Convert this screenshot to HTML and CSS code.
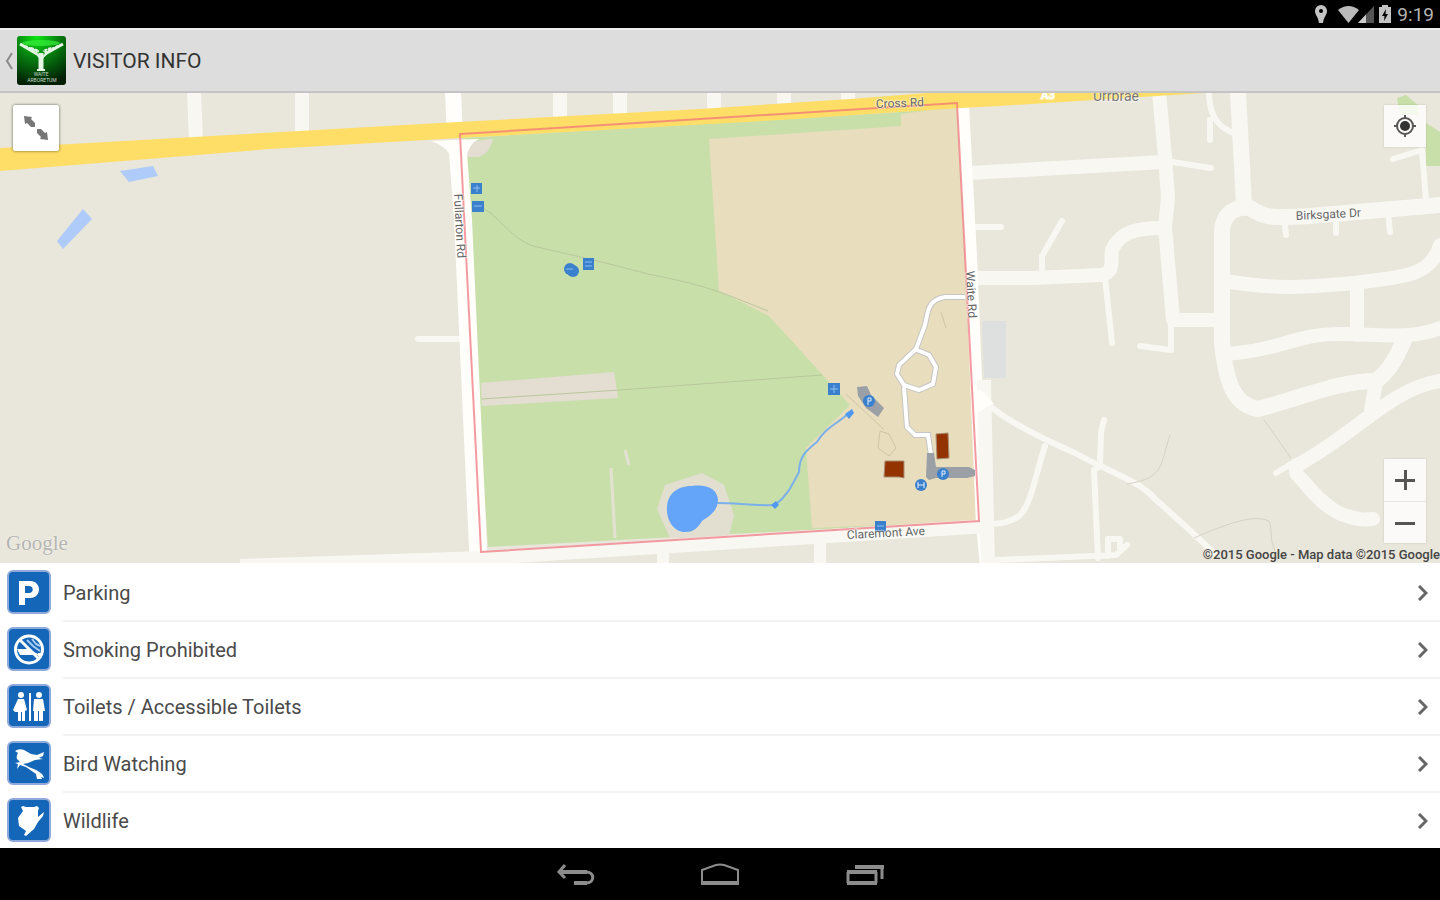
FILE: index.html
```html
<!DOCTYPE html>
<html lang="en">
<head>
  <meta charset="utf-8">
  <meta content="width=device-width, initial-scale=1.0" name="viewport">
  <title>Visitor Info</title>
  <link rel="stylesheet" href="styles.css">
</head>
<body>
  <div class="status-bar">
    <svg class="status-pin" viewBox="0 0 12 18" aria-hidden="true"><path fill-rule="evenodd" d="M6 0a6 6 0 0 1 6 6c0 4-3 5-4 12H4C3 11 0 10 0 6a6 6 0 0 1 6-6zM6 4a2 2 0 1 0 0 4 2 2 0 0 0 0-4z"/></svg>
    <svg class="status-signal" viewBox="0 0 36 17" aria-hidden="true">
      <path fill="#bbb" d="M0 4Q10.500-4 21 4L10.500 17z"/>
      <path fill="#555" d="M36 0v17H20z"/>
      <path fill="#ccc" d="M28 8.500V17h-8z"/>
    </svg>
    <svg class="status-battery" viewBox="0 0 12 18" aria-hidden="true"><path fill-rule="evenodd" d="M3 0h6v2h3v16H0V2h3zM7 4L3 11h2.500L5 16l4-7H6.500z"/></svg>
    <span class="clock">9:19</span>
  </div>

  <header class="action-bar">
    <a class="up" href="#" aria-label="Navigate up">
      <svg class="up-arrow" viewBox="0 0 8 18" aria-hidden="true"><path d="M7 1L2 9l5 8"/></svg>
      <svg class="logo" viewBox="0 0 49 49" aria-hidden="true">
        <defs>
          <radialGradient id="leaf" cx=".4" cy="0" r="1">
            <stop offset="0" stop-color="#0be812"/>
            <stop offset=".45" stop-color="#078010"/>
            <stop offset="1" stop-color="#001f04"/>
          </radialGradient>
        </defs>
        <rect width="49" height="49" rx="3" fill="url(#leaf)"/>
        <ellipse cx="24" cy="7" rx="19" ry="3" fill="#38ef3c" opacity=".7"/>
        <g fill="none" stroke="#e4f5e4">
          <path stroke-width="3" d="M3 8l17 10M46 8L28 18"/>
          <path stroke-width="2" stroke-dasharray="3 1" d="M8 10l14 6M41 10l-14 6M14 12l8 3M34 12l-8 3"/>
          <path stroke-width="5" d="M24 17v17"/>
          <path stroke-width="2" d="M19 17l5 6 6-6M20 34h8"/>
        </g>
        <text class="logo-text" x="24" y="40">WAITE</text>
        <text class="logo-text" x="25" y="46">ARBORETUM</text>
      </svg>
    </a>
    <h1>VISITOR INFO</h1>
  </header>

  <main class="map">
    <svg class="map-canvas" viewBox="0 93 1440 470" preserveAspectRatio="xMidYMid slice" role="img" aria-label="Map of the arboretum">
      <rect y="92" width="1440" height="472" fill="#e9e6db"/>

      <!-- land -->
      <path fill="#c8dfa9" d="M1397 98l9-3 12 10v10h-18zM1426 123l14 9v34h-14z"/>
      <path fill="#dedfdf" d="M982 321h24v57h-22z"/>
      <path fill="#c8dfaa" d="M462 138l440-26 58-7 18 416-490 26z"/>
      <path fill="#e8ddbc" d="M709 139l192-13v-12l60-8 17 415-166 7-6-80 44-43-81-89-50-25z"/>
      <path fill="#e3ddd2" d="M464 142l29-3q-3 14-14 18h-13zM481 383l133-11 4 26-136 8z"/>
      <path fill="#e2dfd1" d="M665 485l37-12 22 12 10 30-5 21-59 2-13-29z"/>

      <!-- water -->
      <path fill="#aecbfa" d="M120 171l33-5 5 10-29 6zM83 209l9 10-29 30-6-8z"/>
      <path fill="#64a5fa" d="M667 507c1-15 12-21 25-21 15-2 26 3 26 15-1 11-10 16-16 20-4 6-7 11-17 11-11 0-19-12-18-25z"/>
      <path class="stream" d="M717 503c20 0 36 3 58 2 11-8 15-16 24-33 0-16 8-22 18-30 8-14 20-18 32-29"/>
      <path fill="#4f98ef" d="M771 505l5-4 3 4-4 4zM845 414l7-5 2 4-5 6z"/>

      <!-- footpaths -->
      <g class="path">
        <path d="M483 208c20 12 25 28 50 38 52 12 70 16 115 28 60 12 70 17 120 37"/>
        <path d="M482 399l138-9 202-15"/>
        <path stroke="#cfc6a4" d="M846 394l30 28 8 8M880 431l9 3 7 14-7 8-11-8zM941 312l5 16"/>
      </g>
      <path fill="none" stroke="#e3e2d2" stroke-width="3" d="M611 468l4 70M625 450l4 15"/>

      <!-- minor roads -->
      <g class="road">
        <path class="w14" d="M194 92l2 50M302 92v45M560 92v28M620 92v24M714 92v14M784 92v10M848 92v6"/>
        <path class="w6" d="M418 339h45"/>
        <path class="w14" d="M970 173l192-11M974 278h60l66-3c16-2 10-14 12-25 8-18 24-22 50-22M1159 92l6 65 3 40-3 30 8 93h45"/>
        <path class="w18" d="M1238 92l6 113M1440 205l-130 11c-40 2-45 2-60-8-20-2-28 10-28 25v110c4 40 12 62 36 66 50-13 80-28 118-28 12-9 19-20 28-41"/>
        <path class="w14" d="M1225 281c60 10 90 5 130 2 40-6 76-4 85-38M1357 285v50M1226 354c60-5 70-20 112-20 50 0 70 6 102-6"/>
        <path class="w14" d="M1440 381c-50 8-80 50-144 85-2 8 3 10 8 16 15 18 28 30 43 34 12 4 18 4 26 3M1376 382l-5 28"/>
        <path class="w6" d="M974 227h27M1042 276v-20l20-35M1105 277l7 66M1171 320v30l-31-4M1172 162l39 6M1209 92c0 25 10 37 28 42M1210 120v20M1284 217l2 18M1336 215v18M1388 212l2 20M1426 200l-4-50-29 9M1276 473l20-12"/>
        <path class="w6" d="M985 402c20 18 60 38 90 51 32 18 65 28 80 46 16 14 38 34 60 55M1045 446c-10 30-14 60-26 70-10 7-20 8-32 8M1104 420l-3 12-1 34-6 4 4 88M996 560l120-5 11-10M1108 556v-17h12v12"/>
      </g>
      <path fill="none" stroke="#d5d2c5" d="M1170 435c-10 30-5 43-43 49M1264 420l27 38M1194 538c35-15 60-24 75-17 4 10 0 16 6 30"/>

      <!-- main roads -->
      <g fill="none" stroke="#fffefa">
        <path stroke-width="16" d="M453 92l2 45"/>
        <path stroke-width="18" d="M457 140l6 80 16 350"/>
        <path stroke-width="12" d="M963 104l8 152 11 270 5 50"/>
        <path class="soft" stroke-width="14" d="M984 380l3 144 1 40"/>
        <path class="soft" stroke-width="14" d="M240 566l243-8 505-32"/>
        <path class="soft" stroke-width="12" d="M663 548v20M820 539v28"/>
      </g>
      <path fill="#fffefa" d="M431 141l48-2q-10 4-13 20h-14q-5-13-21-18zM974 388l-3 14 5 12 12-8 6-2-10-12z"/>
      <path fill="#fede66" d="M0 148L440 123 700 109 850 99 940 92h280l-220 14-40 2-180 12-320 18-190 11L0 171z"/>

      <!-- drive and car parks -->
      <g fill="none">
        <path stroke="#c5c5c5" stroke-width="6" d="M965 297h-20c-18 3-17 15-20 28l-9 24-17 16-2 9 7 11 15 5 14-6 3-17-7-12-12-5M904 387l3 40 8 8h13l3 20"/>
        <path stroke="#fff" stroke-width="4" d="M965 297h-20c-18 3-17 15-20 28l-9 24-17 16-2 9 7 11 15 5 14-6 3-17-7-12-12-5M904 387l3 40 8 8h13l3 20"/>
      </g>
      <path fill="#9b9fa6" d="M857 387l10-1 4 9 13 13-6 9-12-9-8-12zM927 453h7l2 14h33l6 3v6l-8 2h-31l-7 2-3-3z"/>
      <path fill="#933300" stroke="#a98d76" d="M936 434l12-1 1 25-12 1zM885 461h19v17l-5-1h-15z"/>

      <!-- park boundary -->
      <path class="boundary" d="M460 134l497-31 22 418-498 31z"/>

      <!-- place markers -->
      <g fill="#3a80cc">
        <path d="M471 183h11v11h-11zM472 201h12v11h-12zM583 258h11v12h-11zM828 383h12v12h-12zM875 521h11v11h-11z"/>
        <circle cx="570" cy="269" r="6"/><circle cx="573" cy="271" r="6"/>
        <circle cx="869" cy="401" r="6"/><circle cx="943" cy="474" r="6"/><circle cx="921" cy="485" r="6"/>
      </g>
      <g fill="none" stroke="#8fc0f0">
        <path d="M473 188h7M477 185v7M474 206h8M585 262h7M585 266h7M566 269h7M830 389h8M834 385v8M877 526h7"/>
        <path stroke="#e4effb" d="M868 405v-7h3v3h-3M942 477v-6h3v3h-3M918 482v6M924 482v6M918 485h6"/>
      </g>

      <!-- labels -->
      <g class="label">
        <text transform="translate(876 108) rotate(-2)">Cross Rd</text>
        <text transform="translate(454 194) rotate(87)">Fullarton Rd</text>
        <text transform="translate(966 271) rotate(87)">Waite Rd</text>
        <text transform="translate(847 539) rotate(-3)">Claremont Ave</text>
        <text transform="translate(1296 220) rotate(-3)">Birksgate Dr</text>
        <text class="suburb" x="1093" y="101">Urrbrae</text>
        <text class="route" x="1041" y="99">A3</text>
      </g>
    </svg>
    <button class="map-btn expand" type="button" aria-label="Expand map">
      <svg viewBox="0 0 24 24" aria-hidden="true"><path d="M0 0l8 1-1 2 4 4v4H7L3 7 1 8zM24 24l-8-1 1-2-4-4v-4h4l4 4 2-1z"/></svg>
    </button>
    <button class="map-btn locate" type="button" aria-label="My location">
      <svg viewBox="0 0 24 24" aria-hidden="true"><circle cx="12" cy="12" r="5"/><path fill="none" stroke="#555" stroke-width="2" d="M12 4a8 8 0 1 0 0 16 8 8 0 0 0 0-16zM12 1v3M12 20v3M1 12h3M20 12h3"/></svg>
    </button>
    <div class="zoom">
      <button type="button" aria-label="Zoom in"><svg viewBox="0 0 20 20" aria-hidden="true"><path d="M9 0h3v9h8v3h-8v8H9v-8H0V9h9z"/></svg></button>
      <button type="button" aria-label="Zoom out"><svg viewBox="0 0 20 20" aria-hidden="true"><path d="M0 9h20v3H0z"/></svg></button>
    </div>
    <span class="google">Google</span>
    <span class="copyright">©2015 Google - Map data ©2015 Google</span>
  </main>

  <ul class="places">
    <li>
      <svg class="sign" viewBox="0 0 44 44" aria-hidden="true"><rect x="1" y="1" width="42" height="42" rx="5"/><path class="white" fill-rule="evenodd" d="M12 11h11c12 0 12 17 0 17h-5v7h-6zM18 16v7h4c5 0 5-7 0-7z"/></svg>
      <a href="#">Parking<svg class="chevron" viewBox="0 0 10 16" aria-hidden="true"><path d="M1 1l7 7-7 7"/></svg></a>
    </li>
    <li>
      <svg class="sign" viewBox="0 0 44 44" aria-hidden="true"><rect x="1" y="1" width="42" height="42" rx="5"/><path class="white" d="M10 22h11l12 6H13zM31 26h4v3h-4z"/><path class="smoke" d="M20 13l6 6 7 5M25 12l4 5 4 2"/><path class="ring" d="M22 9a13 13 0 1 0 0 27 13 13 0 0 0 0-27zM12 12l20 20"/></svg>
      <a href="#">Smoking Prohibited<svg class="chevron" viewBox="0 0 10 16" aria-hidden="true"><path d="M1 1l7 7-7 7"/></svg></a>
    </li>
    <li>
      <svg class="sign" viewBox="0 0 44 44" aria-hidden="true"><rect x="1" y="1" width="42" height="42" rx="5"/><g class="white"><circle cx="14" cy="11" r="3"/><circle cx="32" cy="11" r="3"/><path d="M11 15h6l3 11-2 1v10h-3v-9h-1v9h-3v-9H8l-2-2zM22 9h2v28h-2zM27 15h9l2 12h-2v10h-4V27h-1v10h-4V27h-1z"/></g></svg>
      <a href="#">Toilets / Accessible Toilets<svg class="chevron" viewBox="0 0 10 16" aria-hidden="true"><path d="M1 1l7 7-7 7"/></svg></a>
    </li>
    <li>
      <svg class="sign" viewBox="0 0 44 44" aria-hidden="true"><rect x="1" y="1" width="42" height="42" rx="5"/><path class="white" d="M8 10q4-3 9-1l7 4 6 1 7-3-1 4-4 2 4 1-8 1-7 3-5 1 8 4c6 2 12 5 13 10l-3-1 1 2h-5l-1-5-10-7-6-2-3 4 1-5-3-1 5-1-3-3q-1-3 1-6z"/></svg>
      <a href="#">Bird Watching<svg class="chevron" viewBox="0 0 10 16" aria-hidden="true"><path d="M1 1l7 7-7 7"/></svg></a>
    </li>
    <li>
      <svg class="sign" viewBox="0 0 44 44" aria-hidden="true"><rect x="1" y="1" width="42" height="42" rx="5"/><path class="white" d="M14 9l2-1 3 1h8l3-1 2 2-1 3v6l6-5-1 4-5 6-4 7-8 7-2-1 2-4-7-5-1-8 5-7z"/></svg>
      <a href="#">Wildlife<svg class="chevron" viewBox="0 0 10 16" aria-hidden="true"><path d="M1 1l7 7-7 7"/></svg></a>
    </li>
  </ul>

  <nav class="nav-bar">
    <button type="button" aria-label="Back"><svg viewBox="0 0 40 24" aria-hidden="true"><path stroke-width="3" d="M10 2L4 9l6 6"/><path stroke-width="4" d="M5 9h27"/><path stroke-width="3" d="M31 9c9 0 9 11 0 11"/><path stroke-width="4" d="M32 20H19"/></svg></button>
    <button type="button" aria-label="Home"><svg viewBox="0 0 40 24" aria-hidden="true"><path stroke-width="2" d="M2 21V7l14-5q4-1 8 0l14 5v14"/><path stroke-width="4" d="M1 20h38"/></svg></button>
    <button type="button" aria-label="Recent apps"><svg viewBox="0 0 40 24" aria-hidden="true"><path stroke-width="3" d="M3 9v11M31 9v11M37 3v13"/><path stroke-width="4" d="M2 9h30M2 20h30M10 4h29"/></svg></button>
  </nav>
</body>
</html>
```
FILE: styles.css
```css
* {
  box-sizing: border-box;
}

body {
  margin: 0;
  min-height: 100vh;
  display: flex;
  flex-direction: column;
  font-family: Roboto, "Open Sans", sans-serif;
  color: #4a4a4a;
  background: #fff;
}

button {
  margin: 0;
  padding: 0;
  border: 0;
  background: none;
  display: flex;
  align-items: center;
  justify-content: center;
  cursor: pointer;
}

a {
  color: inherit;
  text-decoration: none;
}

svg {
  display: block;
  flex: none;
}

/* status bar */
.status-bar {
  display: flex;
  align-items: center;
  justify-content: flex-end;
  height: 28px;
  padding-right: 6px;
  background: #000;
  fill: #c4c4c4;
}

.status-pin,
.status-battery {
  width: 12px;
  height: 18px;
}

.status-signal {
  width: 36px;
  height: 17px;
  margin: 0 5px 0 11px;
}

.clock {
  margin-left: 6px;
  padding-top: 2px;
  font-size: 19px;
  line-height: 24px;
  color: #b4b4b4;
}

/* action bar */
.action-bar {
  display: flex;
  align-items: center;
  height: 65px;
  padding-left: 5px;
  background: #ddd;
  border-top: 2px solid #ededed;
  border-bottom: 2px solid #c4c4c4;
}

.up {
  display: flex;
  align-items: center;
  gap: 4px;
}

.up-arrow {
  width: 8px;
  height: 18px;
  fill: none;
  stroke: #8a8a8a;
  stroke-width: 2;
}

.logo {
  width: 49px;
  height: 49px;
}

.logo-text {
  font-size: 5px;
  fill: #c9d6c9;
  text-anchor: middle;
}

h1 {
  margin: 0 0 0 7px;
  font-size: 21px;
  line-height: 24px;
  font-weight: 400;
  color: #333;
}

/* map */
.map {
  position: relative;
  flex: 1;
  min-height: 320px;
  overflow: hidden;
}

.map-canvas {
  position: absolute;
  top: 0;
  left: 0;
  width: 100%;
  height: 100%;
}

.road {
  fill: none;
  stroke: #f8f7f2;
  stroke-linejoin: round;
  stroke-linecap: round;
}

.soft {
  stroke: #f8f7f2;
}

.w18 { stroke-width: 16px; }
.w14 { stroke-width: 14px; }
.w6 { stroke-width: 6px; }

.path {
  fill: none;
  stroke: #b9c79b;
  stroke-width: 1px;
}

.stream {
  fill: none;
  stroke: #7bb0ea;
  stroke-width: 2px;
}

.boundary {
  fill: none;
  stroke: #f0707c;
  stroke-width: 2px;
  stroke-opacity: .7;
}

.label {
  font-size: 12px;
  fill: #666;
}

.label text {
  paint-order: stroke;
  stroke: #fff;
  stroke-opacity: .5;
  stroke-width: 2px;
}

.label .suburb {
  font-size: 14px;
  fill: #777;
}

.label .route {
  font-size: 11px;
  font-weight: 700;
  fill: #fff;
}

.map-btn,
.zoom {
  position: absolute;
  background: rgba(255, 255, 255, .8);
  box-shadow: 0 0 2px rgba(0, 0, 0, .15);
}

.expand {
  top: 12px;
  left: 13px;
  width: 46px;
  height: 46px;
  border-radius: 2px;
  background: #fff;
  box-shadow: 0 0 3px rgba(0, 0, 0, .6);
  fill: #777;
}

.map-btn svg {
  width: 24px;
  height: 24px;
}

.locate {
  top: 12px;
  right: 14px;
  width: 42px;
  height: 42px;
  fill: #333;
}

.zoom {
  right: 14px;
  bottom: 20px;
  width: 42px;
  fill: #555;
}

.zoom button {
  width: 42px;
  height: 42px;
}

.zoom button + button {
  border-top: 1px solid #e4e4e4;
}

.zoom svg {
  width: 20px;
  height: 20px;
}

.google {
  position: absolute;
  left: 6px;
  bottom: 8px;
  font-family: "Liberation Serif", serif;
  font-size: 21px;
  line-height: 24px;
  color: #b4b4b0;
  text-shadow: 0 0 2px #fff;
}

.copyright {
  position: absolute;
  right: 0;
  bottom: 0;
  font-size: 13px;
  font-weight: 500;
  line-height: 16px;
  color: #444;
}

/* list of places */
.places {
  margin: 0;
  padding: 0;
  list-style: none;
}

.places li {
  display: flex;
  align-items: center;
  gap: 12px;
  padding-left: 7px;
}

.places a {
  flex: 1;
  display: flex;
  align-items: center;
  justify-content: space-between;
  height: 57px;
  padding-right: 12px;
  font-size: 20px;
  line-height: 24px;
  border-top: 2px solid #f3f3f3;
}

.places li:first-child a {
  border-top-color: #fff;
}

.sign {
  width: 44px;
  height: 44px;
}

.sign rect {
  fill: #1467b8;
  stroke: #8fa9da;
  stroke-width: 2;
}

.white {
  fill: #fff;
}

.smoke,
.ring {
  fill: none;
  stroke: #a9cbee;
  stroke-width: 2;
}

.ring {
  stroke: #fff;
  stroke-width: 3;
}

.chevron {
  width: 10px;
  height: 16px;
  fill: none;
  stroke: #666;
  stroke-width: 3;
}

/* system navigation */
.nav-bar {
  display: flex;
  justify-content: center;
  gap: 64px;
  height: 52px;
  padding-top: 2px;
  background: #000;
}

.nav-bar button {
  width: 81px;
}

.nav-bar svg {
  width: 40px;
  height: 24px;
  fill: none;
  stroke: #8c8c8c;
}
```
